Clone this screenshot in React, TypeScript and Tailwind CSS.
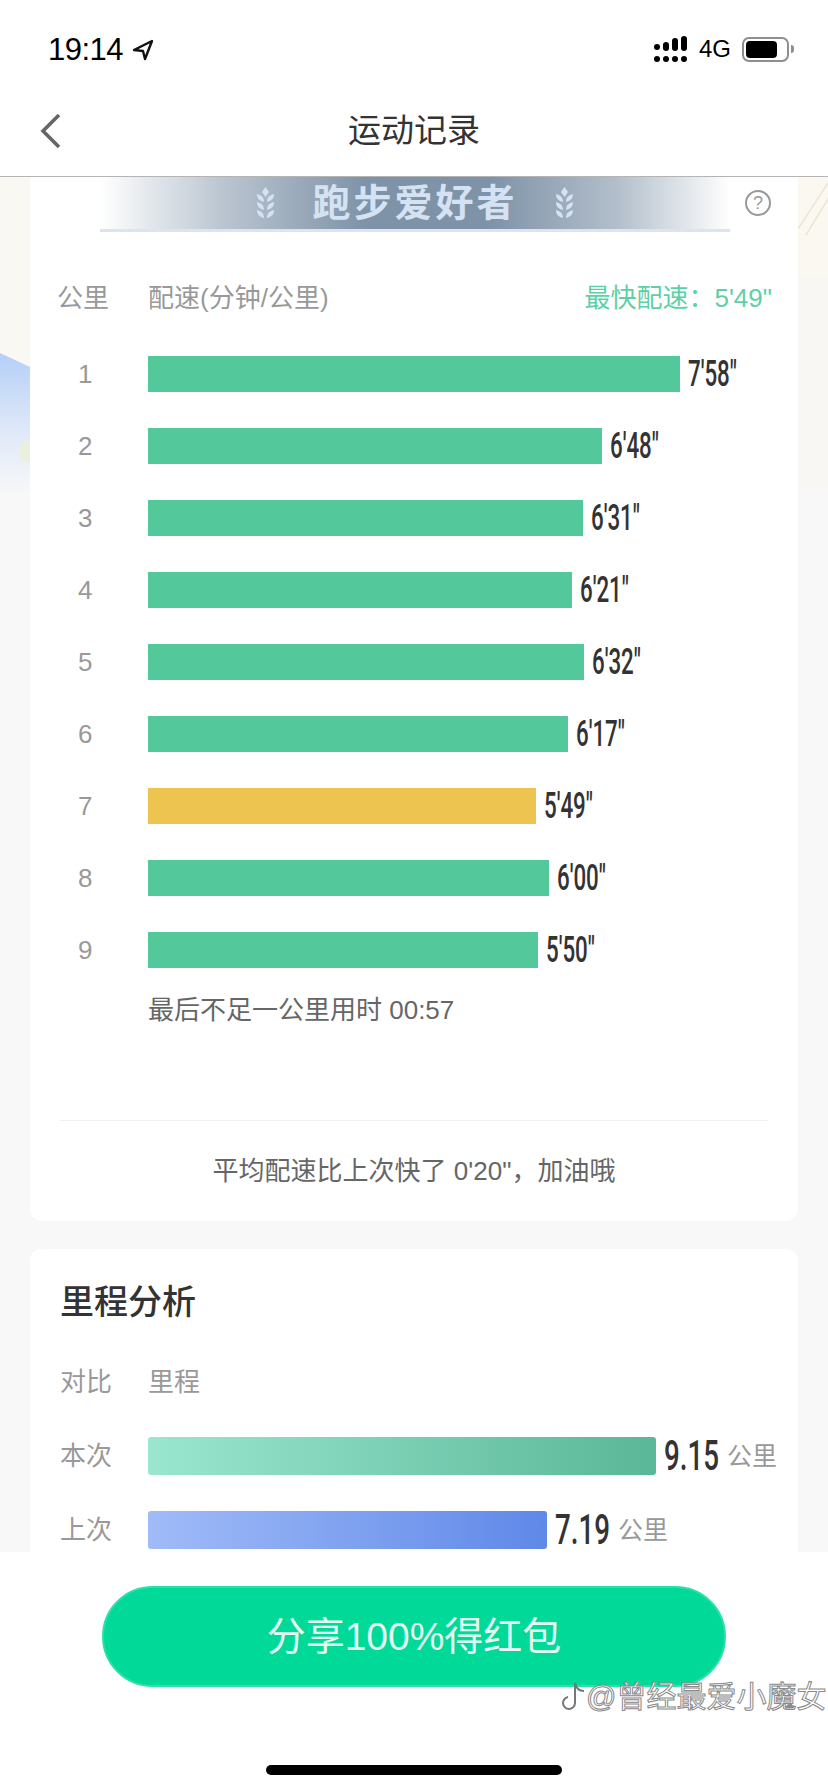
const sansFont = "[font-family:'Liberation_Sans','Noto_Sans_CJK_SC',sans-serif]";

const paces = [
  { km: 1, width: 532, pace: `7'58"` },
  { km: 2, width: 454, pace: `6'48"` },
  { km: 3, width: 435, pace: `6'31"` },
  { km: 4, width: 424, pace: `6'21"` },
  { km: 5, width: 436, pace: `6'32"` },
  { km: 6, width: 420, pace: `6'17"` },
  { km: 7, width: 388, pace: `5'49"`, fastest: true },
  { km: 8, width: 401, pace: `6'00"` },
  { km: 9, width: 390, pace: `5'50"` },
];

function StatusBar() {
  return (
    <div className="h-[88px] shrink-0 flex items-start justify-between pl-[48px] pr-[34px] pt-[32px]">
      <div className="flex items-center gap-[9px]">
        <span className="text-[31px] leading-[36px] font-medium text-black tracking-[-0.5px] font-['Liberation_Sans',sans-serif]">19:14</span>
        <svg width="22" height="22" viewBox="0 0 22 22" fill="none" stroke="#111" strokeWidth="2.4" strokeLinejoin="round">
          <path d="M20 2 2 11l9 1 2 8z" />
        </svg>
      </div>
      <div className="flex items-center gap-[11px] pt-[3px]">
        <svg width="34" height="26" viewBox="0 0 34 26" fill="#000">
          <rect x="0" y="8" width="6" height="6" rx="3" />
          <rect x="9" y="6" width="6" height="9" rx="3" />
          <rect x="18" y="2" width="6" height="13" rx="3" />
          <rect x="27" y="0" width="6" height="15" rx="3" />
          <rect x="0" y="20" width="6" height="6" rx="3" />
          <rect x="9" y="20" width="6" height="6" rx="3" />
          <rect x="18" y="20" width="6" height="6" rx="3" />
          <rect x="27" y="20" width="6" height="6" rx="3" />
        </svg>
        <span className="text-[24px] leading-[28px] text-black font-['Liberation_Sans',sans-serif]">4G</span>
        <div className="flex items-center gap-[2px]">
          <div className="w-[47px] h-[25px] rounded-[7px] border-2 border-[#8e8e8e] p-[2px] pr-[10px]">
            <div className="w-full h-full rounded-[4px] bg-black" />
          </div>
          <div className="w-[3px] h-[8px] rounded-r-full bg-[#8e8e8e]" />
        </div>
      </div>
    </div>
  );
}

function NavBar() {
  return (
    <div className="h-[89px] shrink-0 relative flex items-center justify-center border-b border-[#b4b4b4]">
      <svg className="absolute left-[38px] top-[25px]" width="24" height="36" viewBox="0 0 24 36" fill="none" stroke="#666" strokeWidth="3.6">
        <path d="M21 2 5 18l16 16" />
      </svg>
      <span className="text-[33px] leading-[44px] text-[#333] pb-[3px]">运动记录</span>
    </div>
  );
}

function Wheat() {
  return (
    <svg width="19" height="32" viewBox="0 0 19 32" fill="#d5e2f3">
      <path d="M9.5 0 13 5 9.5 10 6 5z" />
      <path d="M1 7c4 1 7 3 7 8-4-1-7-3-7-8zM18 7c-4 1-7 3-7 8 4-1 7-3 7-8z" />
      <path d="M1 15c4 1 7 3 7 8-4-1-7-3-7-8zM18 15c-4 1-7 3-7 8 4-1 7-3 7-8z" />
      <path d="M1 23c4 1 7 3 7 8-4-1-7-3-7-8zM18 23c-4 1-7 3-7 8 4-1 7-3 7-8z" />
    </svg>
  );
}

function Banner() {
  return (
    <div className="relative h-[58px]">
      <div className="absolute left-[70px] top-0 w-[630px] h-[55px] flex items-center justify-center gap-[37px] bg-[linear-gradient(90deg,rgba(127,147,168,0)_0%,rgba(127,147,168,0.55)_20%,#7f93a8_42%,#7f93a8_62%,rgba(127,147,168,0.6)_82%,rgba(127,147,168,0)_100%)] border-b-[3px] border-[#dbe5f0]">
        <Wheat />
        <span className="text-[38px] leading-[48px] font-bold tracking-[3px] text-[#d5e2f3]">跑步爱好者</span>
        <Wheat />
      </div>
      <div className="absolute left-[715px] top-[13px] w-[26px] h-[26px] rounded-full border-2 border-[#999] flex items-center justify-center text-[18px] leading-none text-[#999]">?</div>
    </div>
  );
}

function PaceRow({ km, width, pace, fastest }: { km: number; width: number; pace: string; fastest?: boolean }) {
  return (
    <div className="flex items-center h-[36px]">
      <span className="w-[118px] pl-[48px] text-[26px] leading-[36px] text-[#999]">{km}</span>
      <div className={fastest ? 'h-full bg-[#ecc44f]' : 'h-full bg-[#52c89b]'} style={{ width }} />
      <span className="ml-[8px] origin-left scale-x-[0.62] text-[36px] leading-[36px] font-medium text-[#333] font-['Roboto',sans-serif]">{pace}</span>
    </div>
  );
}

function PaceCard() {
  return (
    <div className="bg-white rounded-b-[12px] pb-[32px]">
      <Banner />
      <div className="mt-[45px] flex items-center text-[26px] leading-[36px] text-[#999]">
        <span className="w-[118px] pl-[27px]">公里</span>
        <span className="flex-1">配速(分钟/公里)</span>
        <span className="pr-[26px] text-[#5dd0a8]">最快配速：5'49"</span>
      </div>
      <div className="mt-[40px] flex flex-col gap-[36px]">
        {paces.map((p) => (
          <PaceRow key={p.km} {...p} />
        ))}
      </div>
      <div className="mt-[24px] pl-[118px] text-[26px] leading-[36px] text-[#666]">最后不足一公里用时 00:57</div>
      <div className="mt-[92px] mx-[30px] h-px bg-[#f0f0f0]" />
      <div className="mt-[32px] text-center text-[26px] leading-[36px] text-[#666]">平均配速比上次快了 0'20"，加油哦</div>
    </div>
  );
}

function MileageRow({ label, width, value, barClass }: { label: string; width: number; value: string; barClass: string }) {
  return (
    <div className="flex items-center h-[38px]">
      <span className="w-[88px] text-[26px] leading-[36px] text-[#999]">{label}</span>
      <div className={barClass} style={{ width }} />
      <div className="relative ml-[8px] h-full w-[125px]">
        <span className="absolute left-0 top-0 origin-left scale-x-[0.66] text-[42px] leading-[38px] font-medium text-[#333] font-['Roboto',sans-serif]">{value}</span>
        <span className="absolute left-[63px] top-[1px] text-[25px] leading-[36px] text-[#999]">公里</span>
      </div>
    </div>
  );
}

function MileageCard() {
  return (
    <div className="mt-[28px] bg-white rounded-t-[12px] pt-[29px] pl-[30px] h-[340px]">
      <div className="text-[34px] leading-[48px] font-medium text-[#333]">里程分析</div>
      <div className="mt-[38px] flex text-[26px] leading-[36px] text-[#999]">
        <span className="w-[88px]">对比</span>
        <span>里程</span>
      </div>
      <div className="mt-[37px] flex flex-col gap-[36px]">
        <MileageRow label="本次" width={508} value="9.15" barClass="h-full rounded-[3px] bg-[linear-gradient(90deg,#9ae6cf,#5ab797)]" />
        <MileageRow label="上次" width={399} value="7.19" barClass="h-full rounded-[3px] bg-[linear-gradient(90deg,#a0bbf8,#5f88e8)]" />
      </div>
    </div>
  );
}

function Backdrop() {
  return (
    <svg className="absolute left-0 top-0" width="828" height="320" viewBox="0 0 828 320">
      <defs>
        <linearGradient id="sky" x1="0" y1="0" x2="0" y2="1">
          <stop offset="0" stopColor="#b4cff7" />
          <stop offset="0.55" stopColor="#dfe9f8" />
          <stop offset="1" stopColor="#f8f8f8" />
        </linearGradient>
      </defs>
      <rect width="828" height="320" fill="#f8f8f8" />
      <rect width="828" height="200" fill="#faf8f2" />
      <rect x="797" width="31" height="310" fill="#f8f7f4" />
      <rect x="797" width="31" height="100" fill="#fbf8f1" />
      <path d="M0 176 30 190V318H0z" fill="url(#sky)" />
      <circle cx="30" cy="274" r="11" fill="#e9f0dc" />
      <path d="M828 6 798 52M828 22 806 58" stroke="#eee6d4" strokeWidth="1.5" />
    </svg>
  );
}

function Watermark() {
  return (
    <div className="absolute left-[560px] top-[126px] flex items-center text-[30px] leading-[38px] text-white [-webkit-text-stroke:1px_#8a8a8a]">
      <svg width="26" height="34" viewBox="0 0 26 34" fill="none" stroke="#777" strokeWidth="2">
        <path d="M15 3c1 5 4 8 9 8M15 3v20a6 6 0 1 1-7-6" />
      </svg>
      <span>@曾经最爱小魔女</span>
    </div>
  );
}

export default function App() {
  return (
    <div className={`relative w-[828px] h-[1792px] overflow-hidden flex flex-col bg-white ${sansFont}`}>
      <StatusBar />
      <NavBar />
      <div className="relative h-[1375px] shrink-0 overflow-hidden bg-[#f8f8f8]">
        <Backdrop />
        <div className="relative mx-[30px]">
          <PaceCard />
          <MileageCard />
        </div>
      </div>
      <div className="relative flex-1 pt-[34px]">
        <div className="mx-auto w-[624px] h-[101px] rounded-full bg-[#00d998] border-2 border-[#2de0ab] flex items-center justify-center text-[39px] leading-[48px] text-[#e4fbf2]">
          分享100%得红包
        </div>
        <Watermark />
        <div className="absolute left-[266px] top-[213px] w-[296px] h-[10px] rounded-full bg-black" />
      </div>
    </div>
  );
}
